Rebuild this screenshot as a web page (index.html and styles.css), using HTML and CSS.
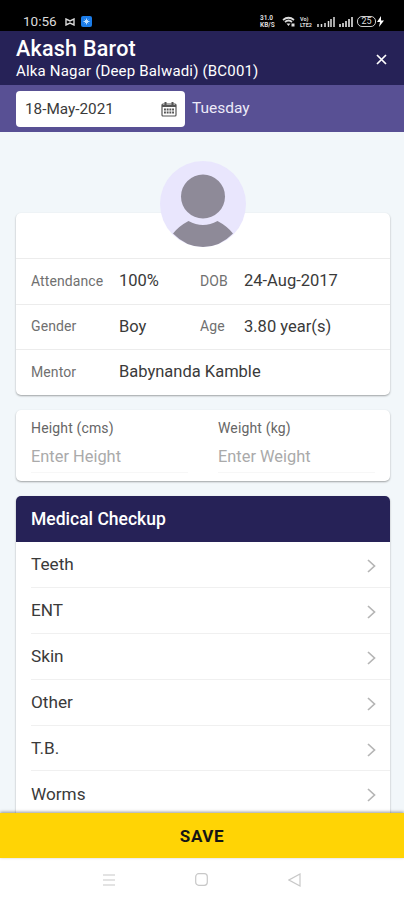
FILE: index.html
```html
<!DOCTYPE html>
<html lang="en">
<head>
  <meta charset="UTF-8">
  <meta name="viewport" content="width=device-width, initial-scale=1.0">
  <title>Medical Checkup</title>
  <link rel="stylesheet" href="styles.css">
</head>
<body>
  <div class="status-bar">
    <span class="clock">10:56</span>
    <svg class="bow" width="10" height="8" viewBox="0 0 10 8"><path d="M1 1v6l4-2 4 2V1L5 3z" fill="none" stroke="#d8d8d8" stroke-width="1.4"/></svg>
    <svg class="app" width="11" height="11" viewBox="0 0 11 11"><rect width="11" height="11" rx="2" fill="#1b7ce8"/><path d="M5.5 2.5v6M2.5 5.5h6M3.7 3.7l3.6 3.6M7.3 3.7L3.7 7.3" stroke="#b9dcff" stroke-width="1"/></svg>
    <div class="status-right">
      <div class="speed"><span>31.0</span><span>KB/S</span></div>
      <svg width="14" height="11" viewBox="0 0 14 11"><path d="M1 4q5.500-4.500 11 0M3 6q3.500-3 7 0" fill="none" stroke="#ddd" stroke-width="1.700"/><path d="M4.500 7.500h4L6.500 10zM9.500 7.500h3v3h-3z" fill="#ddd"/></svg>
      <div class="volte"><span>Vo)</span><span>LTE2</span></div>
      <svg width="18" height="11" viewBox="0 0 18 11"><path d="M1 8v3M4.500 8v3M8 7v4M11.500 5v6M14 3v8M17 1v10" stroke="#ddd" stroke-width="1.500"/></svg>
      <svg width="14" height="11" viewBox="0 0 14 11"><path d="M1 8v3M4 7v4M7 5v6M10 3v8M13 1v10" stroke="#ccc" stroke-width="1.800"/></svg>
      <div class="battery">25</div>
      <svg class="bolt" width="7" height="11" viewBox="0 0 7 11"><path d="M4 0L0 6h3l-1 5 5-6.500H4z" fill="#fff"/></svg>
    </div>
  </div>

  <header class="header">
    <div>
      <h1>Akash Barot</h1>
      <p>Alka Nagar (Deep Balwadi) (BC001)</p>
    </div>
    <svg class="close" width="11" height="11" viewBox="0 0 11 11"><path d="M1 1l9 9M10 1l-9 9" stroke="#fff" stroke-width="1.700"/></svg>
  </header>

  <div class="date-bar">
    <div class="date-input">
      <span>18-May-2021</span>
      <svg width="16" height="16" viewBox="0 0 16 16">
        <rect x="1" y="3" width="14" height="12" rx="1" fill="none" stroke="#555" stroke-width="1.200"/>
        <path d="M1 5h14M4.500 1v4M11.500 1v4" stroke="#555" stroke-width="2"/>
        <path d="M3 8.500h10M3 11.500h10" stroke="#555" stroke-width="2" stroke-dasharray="1.900 .8"/>
      </svg>
    </div>
    <span class="day">Tuesday</span>
  </div>

  <main class="content">
    <section class="card profile">
      <svg class="avatar" width="86" height="86" viewBox="0 0 86 86">
        <circle cx="43" cy="43" r="43" fill="#e9e6fd"/>
        <circle cx="43" cy="35.500" r="22" fill="#8e8a98"/>
        <path d="M28.500 60Q43 68 57.500 60Q67 65 73 72.500Q60 86 43 86T13 72.500Q19 65 28.500 60z" fill="#8e8a98"/>
      </svg>
      <div class="row">
        <span class="label">Attendance</span><span class="value">100%</span>
        <span class="label short">DOB</span><span class="value">24-Aug-2017</span>
      </div>
      <div class="row">
        <span class="label">Gender</span><span class="value">Boy</span>
        <span class="label short">Age</span><span class="value">3.80 year(s)</span>
      </div>
      <div class="row">
        <span class="label">Mentor</span><span class="value">Babynanda Kamble</span>
      </div>
    </section>

    <section class="card measures">
      <div class="field">
        <label for="height">Height (cms)</label>
        <input id="height" type="text" placeholder="Enter Height">
      </div>
      <div class="field">
        <label for="weight">Weight (kg)</label>
        <input id="weight" type="text" placeholder="Enter Weight">
      </div>
    </section>

    <section class="card checkup">
      <h2>Medical Checkup</h2>
      <ul>
        <li><span>Teeth</span><svg width="9" height="14" viewBox="0 0 9 14"><path d="M1 1l6.500 6L1 13"/></svg></li>
        <li><span>ENT</span><svg width="9" height="14" viewBox="0 0 9 14"><path d="M1 1l6.500 6L1 13"/></svg></li>
        <li><span>Skin</span><svg width="9" height="14" viewBox="0 0 9 14"><path d="M1 1l6.500 6L1 13"/></svg></li>
        <li><span>Other</span><svg width="9" height="14" viewBox="0 0 9 14"><path d="M1 1l6.500 6L1 13"/></svg></li>
        <li><span>T.B.</span><svg width="9" height="14" viewBox="0 0 9 14"><path d="M1 1l6.500 6L1 13"/></svg></li>
        <li><span>Worms</span><svg width="9" height="14" viewBox="0 0 9 14"><path d="M1 1l6.500 6L1 13"/></svg></li>
      </ul>
    </section>
  </main>

  <button class="save">SAVE</button>

  <nav class="system-nav">
    <svg width="12" height="12" viewBox="0 0 12 12"><path d="M0 1h12M0 6h12M0 11h12"/></svg>
    <svg width="13" height="13" viewBox="0 0 13 13"><rect x=".7" y=".7" width="11.600" height="11.600" rx="3"/></svg>
    <svg width="13" height="14" viewBox="0 0 13 14"><path d="M12 1v12L1 7z"/></svg>
  </nav>
</body>
</html>
```
FILE: styles.css
```css
* {
  box-sizing: border-box;
}

body {
  margin: 0;
  height: 900px;
  overflow: hidden;
  display: flex;
  flex-direction: column;
  font-family: Roboto, Arial, sans-serif;
  background-color: #f2f7fa;
  color: #3a3a3a;
}

h1, h2, p, ul {
  margin: 0;
  padding: 0;
}

/* phone status bar */
.status-bar {
  flex: none;
  display: flex;
  align-items: center;
  height: 31px;
  padding: 12px 20px 0 23px;
  background-color: #000;
  color: #ddd;
}

.clock {
  width: 33px;
  margin-top: -1px;
  font-size: 13.500px;
  white-space: nowrap;
}

.bow {
  margin-left: 9px;
}

.app {
  margin-left: 6px;
}

.status-right {
  display: flex;
  align-items: center;
  gap: 4px;
  margin-left: auto;
}

.speed, .volte {
  display: flex;
  flex-direction: column;
  font-size: 6.500px;
  line-height: 7px;
  font-weight: bold;
}

.speed {
  width: 18px;
}

.volte {
  width: 13px;
  font-size: 5.500px;
  line-height: 6px;
}

.battery {
  width: 19px;
  height: 11px;
  border: 1.500px solid #ccc;
  border-radius: 5px;
  font-size: 9px;
  line-height: 9px;
  text-align: center;
}

.bolt {
  margin-left: -3px;
}

/* header */
.header {
  flex: none;
  display: flex;
  justify-content: space-between;
  align-items: center;
  height: 54px;
  padding: 1px 17px 0 16px;
  background-color: #262257;
  color: #fff;
}

.header h1 {
  font-size: 21.500px;
  font-weight: 500;
  line-height: 24px;
  letter-spacing: 0.250px;
}

.header p {
  font-size: 15px;
  line-height: 20px;
  letter-spacing: 0.180px;
}

.close {
  margin-top: 2px;
}

.date-bar {
  flex: none;
  display: flex;
  align-items: center;
  height: 47px;
  padding-left: 16px;
  background-color: #585094;
}

.date-input {
  display: flex;
  justify-content: space-between;
  align-items: center;
  width: 169px;
  height: 36px;
  padding: 0 8px 0 9px;
  border-radius: 4px;
  background-color: #fff;
  font-size: 15.300px;
}

.date-bar .day {
  margin: -2px 0 0 7px;
  font-size: 15.500px;
  color: #eceaf8;
}

/* cards */
.content {
  flex: 1;
  min-height: 0;
  overflow: hidden;
  padding: 81px 14px 0 16px;
}

.card {
  border-radius: 5px;
  background-color: #fff;
  box-shadow: 0 1px 2px rgba(0, 0, 0, 0.35);
}

.profile {
  position: relative;
  height: 182px;
  padding-top: 45px;
}

.avatar {
  position: absolute;
  top: -52px;
  left: 144px;
}

.row {
  display: flex;
  align-items: center;
  height: 45.500px;
  padding: 0 0 1px 15px;
  border-top: 1px solid #ececec;
  white-space: nowrap;
}

.label {
  width: 88px;
  font-size: 14px;
  letter-spacing: 0.100px;
  color: #707070;
}

.value {
  width: 81px;
  font-size: 16.500px;
}

.label.short {
  width: 44px;
}

.measures {
  display: flex;
  height: 71px;
  margin-top: 15px;
  padding: 9px 15px 0;
}

.field {
  flex: none;
  width: 187px;
}

.field label {
  display: block;
  font-size: 14px;
  line-height: 18px;
  letter-spacing: 0.150px;
  color: #666;
}

.field input {
  display: block;
  width: 157px;
  height: 31px;
  margin-top: 5px;
  padding: 0 0 1px;
  border: none;
  border-bottom: 1px solid #f7f7f7;
  font-family: inherit;
  font-size: 16.400px;
}

.field input::placeholder {
  color: #aaa;
}

.checkup {
  margin-top: 15px;
}

.checkup h2 {
  height: 46px;
  padding-left: 15px;
  border-radius: 5px 5px 0 0;
  background-color: #262257;
  color: #fff;
  font-size: 17.500px;
  font-weight: 500;
  line-height: 46px;
}

.checkup ul {
  padding-left: 15px;
  list-style: none;
}

.checkup li {
  display: flex;
  justify-content: space-between;
  align-items: center;
  height: 45.900px;
  padding-right: 14px;
  border-bottom: 1px solid #f0f0f0;
  font-size: 17.200px;
}

.checkup li svg {
  margin-top: 3px;
  fill: none;
  stroke: #b5b5b5;
  stroke-width: 1.700;
}

.save {
  flex: none;
  position: relative;
  height: 45px;
  border: none;
  background-color: #ffd405;
  box-shadow: 0 -1px 3px rgba(0, 0, 0, 0.4);
  color: #151515;
  font-family: inherit;
  font-size: 17px;
  font-weight: bold;
  letter-spacing: 0.600px;
}

.system-nav {
  flex: none;
  display: flex;
  justify-content: space-between;
  align-items: center;
  height: 42px;
  padding: 1px 103px 0;
  background-color: #fff;
}

.system-nav svg {
  fill: none;
  stroke: #c8c8c8;
  stroke-width: 1.200;
}
```
